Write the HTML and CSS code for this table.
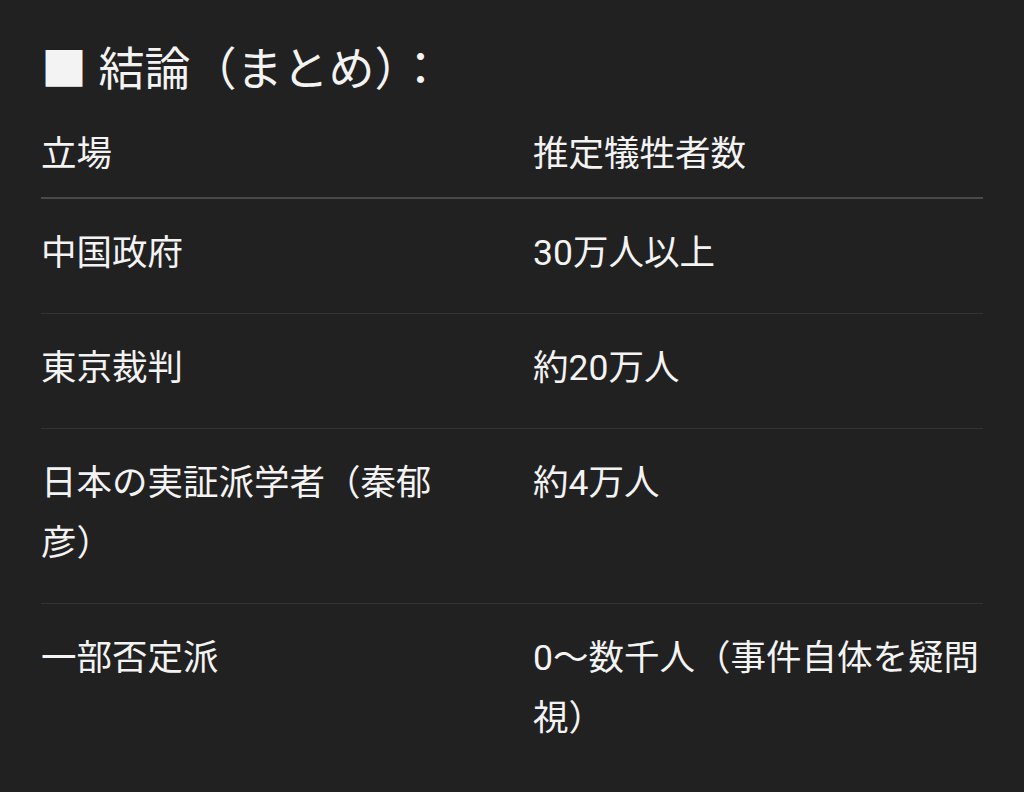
FILE: index.html
```html
<!DOCTYPE html>
<html lang="ja">
<head>
<meta charset="utf-8">
<title>結論（まとめ）</title>
<link rel="stylesheet" href="styles.css">
</head>
<body>
<main class="doc">
  <h2 class="title">■ 結論（まとめ）：</h2>
  <table class="summary">
    <colgroup>
      <col class="col-stance">
      <col class="col-count">
    </colgroup>
    <thead>
      <tr>
        <th>立場</th>
        <th>推定犠牲者数</th>
      </tr>
    </thead>
    <tbody>
      <tr>
        <td>中国政府</td>
        <td>30万人以上</td>
      </tr>
      <tr>
        <td>東京裁判</td>
        <td>約20万人</td>
      </tr>
      <tr>
        <td>日本の実証派学者（秦郁彦）</td>
        <td>約4万人</td>
      </tr>
      <tr>
        <td>一部否定派</td>
        <td>0～数千人（事件自体を疑問視）</td>
      </tr>
    </tbody>
  </table>
</main>
</body>
</html>
```

FILE: styles.css
```css
html, body {
  margin: 0;
  padding: 0;
  background: #212121;
}

body {
  color: #f3f3f3;
  font-family: Roboto, "Noto Sans CJK JP", "Noto Sans", sans-serif;
}

.doc {
  padding: 39px 41px 0;
}

.title {
  margin: 0 0 25px;
  font-size: 46px;
  line-height: 60px;
  font-weight: 400;
}

.summary {
  width: 942px;
  table-layout: fixed;
  border-collapse: collapse;
  font-size: 35.5px;
  line-height: 60px;
}

.col-stance { width: 492px; }
.col-count { width: 450px; }

.summary th {
  text-align: left;
  font-weight: 400;
  padding: 0 0 13px;
  border-bottom: 2px solid #4a4a4a;
}

.summary td {
  vertical-align: top;
  padding: 24px 0 30px;
  border-bottom: 1px solid #333333;
}

.summary th:first-child,
.summary td:first-child {
  padding-right: 82px;
}

.summary tbody tr:last-child td {
  border-bottom: none;
}
```
